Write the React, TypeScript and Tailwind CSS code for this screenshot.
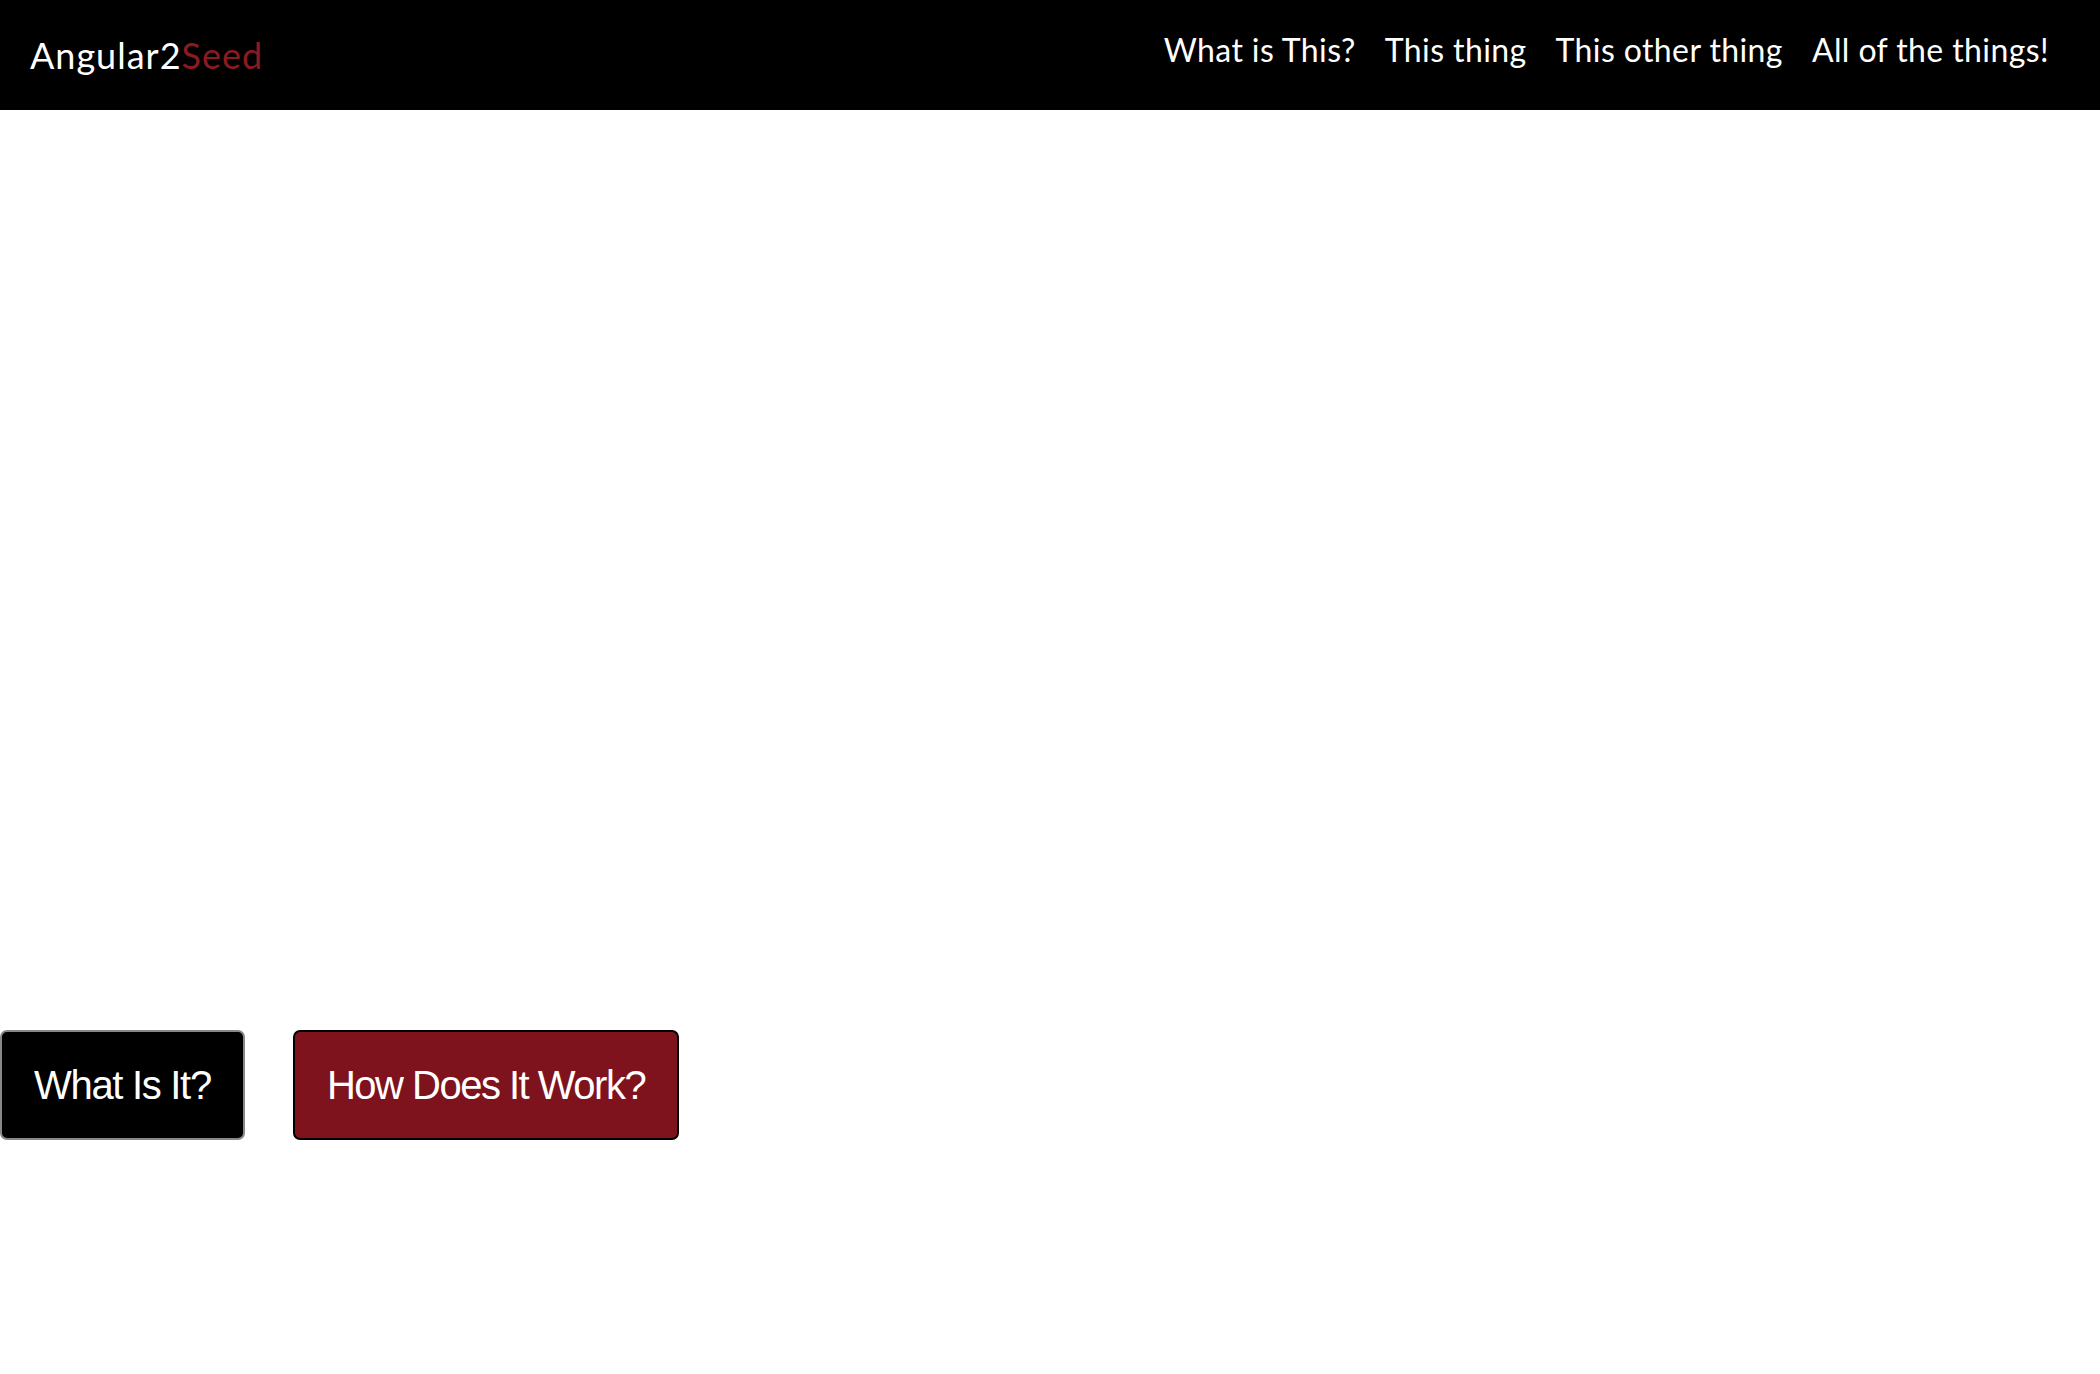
import React from "react";

export default function App() {
  return (
    <div className="min-h-[1374px] w-full bg-white">
      <header className="flex h-[110px] items-center justify-between bg-black pl-[30px] pr-[51px]">
        <div className="pb-[1px] text-[36px] leading-none tracking-[1px] text-white" style={{ fontFamily: "Lato, 'Noto Sans', sans-serif" }}>
          Angular2<span className="text-[#8b1a21]">Seed</span>
        </div>
        <nav className="flex items-center gap-[29px] pb-[10px] text-[32px] leading-none tracking-[0.4px] text-white" style={{ fontFamily: "Lato, 'Noto Sans', sans-serif" }}>
          <a>What is This?</a>
          <a>This thing</a>
          <a>This other thing</a>
          <a>All of the things!</a>
        </nav>
      </header>
      <main className="flex flex-col">
        <div className="h-[920px]" />
        <div className="flex gap-[48px]">
          <button className="h-[110px] rounded-[7px] border-2 border-[#888888] bg-black px-[32px] text-[40px] tracking-[-1.3px] text-white" style={{ fontFamily: "'Liberation Sans', Arial, sans-serif" }}>
            What Is It?
          </button>
          <button className="h-[110px] rounded-[7px] border-2 border-black bg-[#7e121d] px-[32px] text-[40px] tracking-[-1.5px] text-white" style={{ fontFamily: "'Liberation Sans', Arial, sans-serif" }}>
            How Does It Work?
          </button>
        </div>
      </main>
    </div>
  );
}
